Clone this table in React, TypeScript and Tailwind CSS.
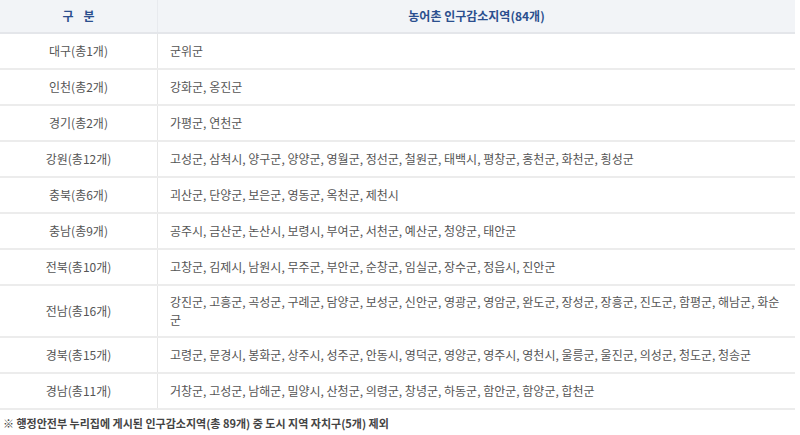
const rows: [string, string][] = [
  ["대구(총1개)", "군위군"],
  ["인천(총2개)", "강화군, 옹진군"],
  ["경기(총2개)", "가평군, 연천군"],
  ["강원(총12개)", "고성군, 삼척시, 양구군, 양양군, 영월군, 정선군, 철원군, 태백시, 평창군, 홍천군, 화천군, 횡성군"],
  ["충북(총6개)", "괴산군, 단양군, 보은군, 영동군, 옥천군, 제천시"],
  ["충남(총9개)", "공주시, 금산군, 논산시, 보령시, 부여군, 서천군, 예산군, 청양군, 태안군"],
  ["전북(총10개)", "고창군, 김제시, 남원시, 무주군, 부안군, 순창군, 임실군, 장수군, 정읍시, 진안군"],
  ["전남(총16개)", "강진군, 고흥군, 곡성군, 구례군, 담양군, 보성군, 신안군, 영광군, 영암군, 완도군, 장성군, 장흥군, 진도군, 함평군, 해남군, 화순군"],
  ["경북(총15개)", "고령군, 문경시, 봉화군, 상주시, 성주군, 안동시, 영덕군, 영양군, 영주시, 영천시, 울릉군, 울진군, 의성군, 청도군, 청송군"],
  ["경남(총11개)", "거창군, 고성군, 남해군, 밀양시, 산청군, 의령군, 창녕군, 하동군, 함안군, 함양군, 합천군"],
];

export default function App() {
  return (
    <div
      className="w-[800px] h-[435px] bg-white text-[12px] text-[#555]"
      style={{ fontFamily: '"Noto Sans CJK KR", "Noto Sans", sans-serif' }}
    >
      <div className="w-[795px]">
        <div className="grid grid-cols-[158px_1fr] h-[34px] bg-[#f2f4f7] border-b-2 border-[#e4e6ea] text-[#2b4f8e] font-bold">
          <div className="flex items-center justify-center border-r border-[#e8eaee]">
            <span className="tracking-[10px] pl-[10px]">구분</span>
          </div>
          <div className="flex items-center justify-center">농어촌 인구감소지역(84개)</div>
        </div>
        {rows.map(([k, v], i) => (
          <div
            key={i}
            className={`grid grid-cols-[158px_1fr] border-b-2 border-[#ececec] ${i === 7 ? "min-h-[52px]" : "h-[36px]"}`}
          >
            <div className="flex items-center justify-center border-r border-[#e6e6e6]">{k}</div>
            <div className="flex items-center px-[12px] leading-[18px]">{v}</div>
          </div>
        ))}
      </div>
      <div className="mt-[5px] pl-[3px] text-[11px] text-[#444] font-semibold">
        ※ 행정안전부 누리집에 게시된 인구감소지역(총 89개) 중 도시 지역 자치구(5개) 제외
      </div>
    </div>
  );
}
